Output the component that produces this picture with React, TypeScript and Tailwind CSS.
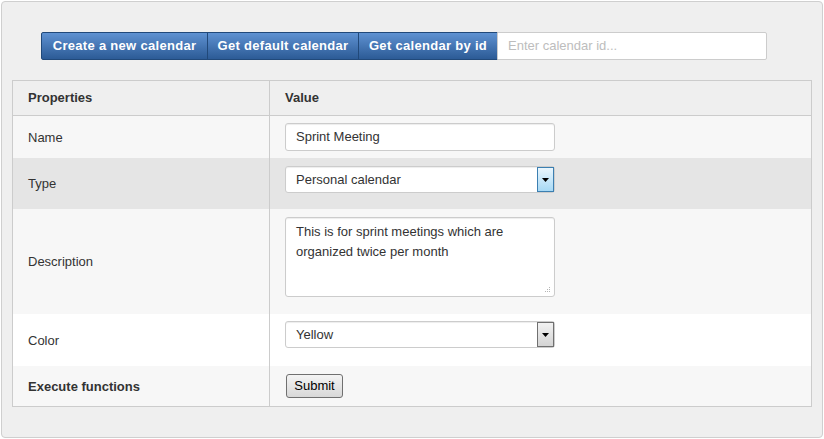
import React from "react";

const font = { fontFamily: '"Liberation Sans", Arial, sans-serif' };

function Arrow({ active }: { active?: boolean }) {
  return (
    <div
      className={
        active
          ? "flex w-[17px] h-full items-center justify-center border border-[#3c7fb1] bg-gradient-to-b from-[#eaf6fd] to-[#a7d9f5]"
          : "flex w-[17px] h-full items-center justify-center border border-[#707070] bg-gradient-to-b from-[#f2f2f2] to-[#d4d4d4]"
      }
    >
      <svg width="7" height="4" viewBox="0 0 7 4">
        <path d="M0 0h7L3.5 4z" fill="#000" />
      </svg>
    </div>
  );
}

function Select({ value, active }: { value: string; active?: boolean }) {
  return (
    <div className="flex w-[270px] h-[27px] items-stretch rounded-[3px] border border-[#cccccc] bg-white shadow-[inset_0_1px_1px_rgba(0,0,0,0.075)]">
      <div className="flex flex-1 items-center pl-[10px] text-[13px] text-[#333]">{value}</div>
      <Arrow active={active} />
    </div>
  );
}

function Row({
  label,
  bg,
  h,
  bold,
  children,
}: {
  label: string;
  bg: string;
  h: string;
  bold?: boolean;
  children: React.ReactNode;
}) {
  return (
    <div className={`flex ${bg} ${h}`}>
      <div
        className={`flex w-[257px] shrink-0 items-center border-r border-[#cccccc] pl-[15px] pt-px text-[13px] text-[#333] ${
          bold ? "font-bold" : ""
        }`}
      >
        {label}
      </div>
      <div className="flex-1 pl-[15px] pt-[7px]">{children}</div>
    </div>
  );
}

const buttons = [
  { t: "Create a new calendar", w: "w-[167px] rounded-l-[2px]" },
  { t: "Get default calendar", w: "w-[152px] -ml-px" },
  { t: "Get calendar by id", w: "w-[140px] -ml-px" },
];

export default function App() {
  return (
    <div className="w-[824px] h-[439px] bg-white p-[1px]" style={font}>
      <div className="h-[437px] w-[822px] rounded-[4px] border border-[#cfcfcf] bg-[#efefef] px-[10px] pt-[30px]">
        <div className="ml-[29px] flex h-[28px]">
          {buttons.map((b) => (
            <div
              key={b.t}
              className={`flex items-center justify-center border border-[#21497a] bg-gradient-to-b from-[#5f92d2] to-[#2c5b96] text-[13px] font-bold tracking-[0.3px] text-white ${b.w}`}
            >
              {b.t}
            </div>
          ))}
          <div className="-ml-px flex w-[270px] items-center rounded-r-[2px] border border-[#cccccc] bg-white pl-[10px] text-[13px] text-[#bdbdbd]">
            Enter calendar id...
          </div>
        </div>

        <div className="mt-[20px] w-[800px] border border-[#cccccc]">
          <div className="flex h-[35px] border-b border-[#cccccc] bg-[#efefef] text-[13px] font-bold text-[#333]">
            <div className="flex w-[257px] items-center border-r border-[#cccccc] pl-[15px]">Properties</div>
            <div className="flex items-center pl-[15px]">Value</div>
          </div>

          <Row label="Name" bg="bg-[#f7f7f7]" h="h-[42px]">
            <div className="flex h-[28px] w-[270px] items-center rounded-[3px] border border-[#cccccc] bg-white pl-[10px] text-[13px] text-[#333] shadow-[inset_0_1px_1px_rgba(0,0,0,0.075)]">
              Sprint Meeting
            </div>
          </Row>

          <Row label="Type" bg="bg-[#e5e5e5]" h="h-[51px]">
            <div className="pt-px">
              <Select value="Personal calendar" active />
            </div>
          </Row>

          <Row label="Description" bg="bg-[#f7f7f7]" h="h-[105px]">
            <div className="relative pt-px">
              <div className="h-[80px] w-[270px] rounded-[3px] border border-[#cccccc] bg-white px-[10px] pt-[4px] text-[13px] leading-[20px] text-[#333] shadow-[inset_0_1px_1px_rgba(0,0,0,0.075)]">
                This is for sprint meetings which are
                <br />
                organized twice per month
              </div>
              <svg className="absolute left-[259px] top-[70px]" width="7" height="7" viewBox="0 0 7 7">
                <g fill="#b5b5b5">
                  <rect x="5" y="1" width="1" height="1" />
                  <rect x="3" y="3" width="1" height="1" />
                  <rect x="5" y="3" width="1" height="1" />
                  <rect x="1" y="5" width="1" height="1" />
                  <rect x="3" y="5" width="1" height="1" />
                  <rect x="5" y="5" width="1" height="1" />
                </g>
              </svg>
            </div>
          </Row>

          <Row label="Color" bg="bg-white" h="h-[52px]">
            <Select value="Yellow" />
          </Row>

          <Row label="Execute functions" bg="bg-[#f7f7f7]" h="h-[40px]" bold>
            <div className="pt-px pl-px">
              <div className="flex h-[24px] w-[57px] items-center justify-center rounded-[3px] border border-[#707070] bg-gradient-to-b from-[#f4f4f4] to-[#d8d8d8] text-[13px] text-black">
                Submit
              </div>
            </div>
          </Row>
        </div>
      </div>
    </div>
  );
}
